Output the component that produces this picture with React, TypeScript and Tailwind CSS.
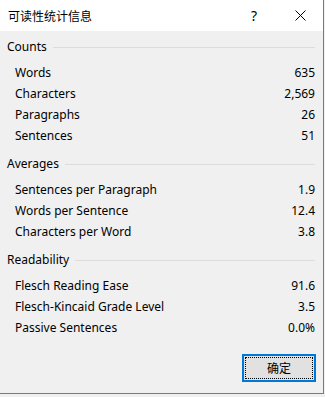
import React from 'react';

type Row = { label: string; value: string };

const sections: { title: string; rows: Row[] }[] = [
  {
    title: 'Counts',
    rows: [
      { label: 'Words', value: '635' },
      { label: 'Characters', value: '2,569' },
      { label: 'Paragraphs', value: '26' },
      { label: 'Sentences', value: '51' },
    ],
  },
  {
    title: 'Averages',
    rows: [
      { label: 'Sentences per Paragraph', value: '1.9' },
      { label: 'Words per Sentence', value: '12.4' },
      { label: 'Characters per Word', value: '3.8' },
    ],
  },
  {
    title: 'Readability',
    rows: [
      { label: 'Flesch Reading Ease', value: '91.6' },
      { label: 'Flesch-Kincaid Grade Level', value: '3.5' },
      { label: 'Passive Sentences', value: '0.0%' },
    ],
  },
];

const Section: React.FC<{ title: string; rows: Row[] }> = ({ title, rows }) => (
  <div className="mb-[8px]">
    <div className="flex items-center h-[20px]">
      <span className="mr-[6px]">{title}</span>
      <div className="flex-1 h-px bg-[#dcdcdc]" />
    </div>
    <div className="pt-[5px] pl-[8px]">
      {rows.map((r) => (
        <div key={r.label} className="flex justify-between items-center h-[21px]">
          <span>{r.label}</span>
          <span>{r.value}</span>
        </div>
      ))}
    </div>
  </div>
);

export default function App() {
  return (
    <div className="w-[325px] h-[397px] bg-[#f0f0f0]">
      <div
        className="w-[324px] h-[394px] flex flex-col bg-[#f0f0f0] border-r border-b border-[#7a7a7a] text-[12px] text-black"
        style={{ fontFamily: '"Segoe UI", "Noto Sans", "Noto Sans CJK SC", sans-serif' }}
      >
        <div className="h-[31px] bg-white flex items-center shrink-0">
          <span className="pl-[8px] flex-1 text-[12px]" style={{ fontFamily: '"Noto Sans CJK SC", sans-serif' }}>
            可读性统计信息
          </span>
          <span className="w-[46px] text-center text-[14px]">?</span>
          <span className="w-[46px] flex justify-center">
            <svg width="11" height="11" viewBox="0 0 11 11">
              <path d="M0.5 0.5 L10.5 10.5 M10.5 0.5 L0.5 10.5" stroke="#000" strokeWidth="1" />
            </svg>
          </span>
        </div>
        <div className="flex-1 pl-[7px] pr-[8px] pt-[6px] flex flex-col">
          {sections.map((s) => (
            <Section key={s.title} title={s.title} rows={s.rows} />
          ))}
          <div className="flex-1" />
          <div className="flex justify-end pb-[11px] mr-[-1px]">
            <button className="w-[74px] h-[28px] border-2 border-[#0078d7] bg-[#e1e1e1] p-px">
              <div
                className="w-full h-full border border-dotted border-black flex items-center justify-center"
                style={{ fontFamily: '"Noto Sans CJK SC", sans-serif' }}
              >
                确定
              </div>
            </button>
          </div>
        </div>
      </div>
    </div>
  );
}
